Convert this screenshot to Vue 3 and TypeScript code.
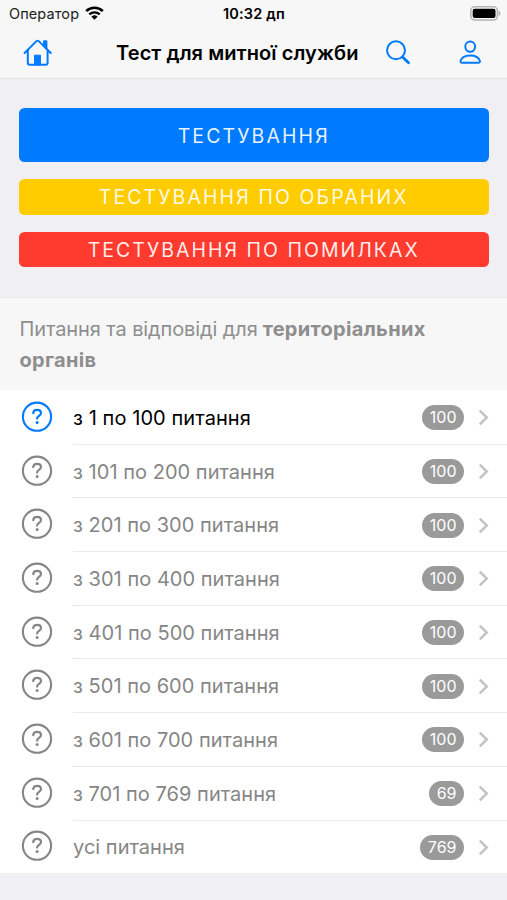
<script setup lang="ts">
interface Row {
  label: string
  count: number
  active?: boolean
}

const rows: Row[] = [
  { label: 'з 1 по 100 питання', count: 100, active: true },
  { label: 'з 101 по 200 питання', count: 100 },
  { label: 'з 201 по 300 питання', count: 100 },
  { label: 'з 301 по 400 питання', count: 100 },
  { label: 'з 401 по 500 питання', count: 100 },
  { label: 'з 501 по 600 питання', count: 100 },
  { label: 'з 601 по 700 питання', count: 100 },
  { label: 'з 701 по 769 питання', count: 69 },
  { label: 'усі питання', count: 769 },
]
</script>

<template>
  <div class="screen">
    <header class="top">
      <div class="status">
        <div class="carrier">
          <span class="carrier-name">Оператор</span>
          <svg class="wifi" width="19" height="14" viewBox="0 0 19 14">
            <path d="M1.2 5.1a12 12 0 0 1 16.6 0" fill="none" stroke="#000" stroke-width="2.6" />
            <path d="M4.3 8.4a7.6 7.6 0 0 1 10.4 0" fill="none" stroke="#000" stroke-width="2.4" />
            <path d="M9.5 13.7 6.4 10.7a4.5 4.5 0 0 1 6.2 0z" fill="#000" />
          </svg>
        </div>
        <span class="clock">10:32 дп</span>
        <div class="power">
          <svg width="31" height="15" viewBox="0 0 31 15">
            <rect x=".8" y=".8" width="26.6" height="13.2" rx="4" fill="#f7f7f7" stroke="#b5b5b5" stroke-width="1.6" />
            <rect x="2.7" y="2.7" width="22.8" height="9.4" rx="2" fill="#000" />
            <path d="M28.6 4.8c2.4 1 2.4 4.2 0 5.2z" fill="#b0b0b0" />
          </svg>
        </div>
      </div>
      <nav class="bar">
        <svg class="home" width="30" height="28" viewBox="0 0 30 28" fill="none" stroke="#007aff" stroke-width="2" stroke-linejoin="round" stroke-linecap="round">
          <path d="M1.6 14 13.2 2.4a2 2 0 0 1 2.8 0L27.7 14" />
          <path d="M4.8 11.5v12.3a2 2 0 0 0 2 2h15.8a2 2 0 0 0 2-2V11.5" />
          <path d="M21 7V2.2h2.4v7.3z" fill="#007aff" />
          <path d="M11.5 25.5v-9.3h6v9.3z" fill="#007aff" stroke-width="1" />
        </svg>
        <h1 class="title">Тест для митної служби</h1>
        <svg class="search" width="26" height="26" viewBox="0 0 26 26" fill="none" stroke="#007aff">
          <circle cx="11" cy="10.3" r="9" stroke-width="2" />
          <path d="m17.5 17 6 5.8" stroke-width="2.8" stroke-linecap="round" />
        </svg>
        <svg class="person" width="24" height="26" viewBox="0 0 24 26" fill="none" stroke="#007aff" stroke-width="2">
          <ellipse cx="12.2" cy="6.6" rx="4.9" ry="5.2" />
          <path d="M4.2 22.8c-1.5 0-2-.8-1.6-2.1 1-3.1 4.6-5.3 9.6-5.3s8.6 2.2 9.6 5.3c.4 1.3-.1 2.1-1.6 2.1z" />
        </svg>
      </nav>
    </header>

    <section class="actions">
      <button class="btn blue">ТЕСТУВАННЯ</button>
      <button class="btn yellow">ТЕСТУВАННЯ ПО ОБРАНИХ</button>
      <button class="btn red">ТЕСТУВАННЯ ПО ПОМИЛКАХ</button>
    </section>

    <div class="group-title">
      <div class="line"><span class="lead">Питання та відповіді для</span><b>територіальних</b></div>
      <div class="line"><b>органів</b></div>
    </div>

    <ul class="list">
      <li v-for="row in rows" :key="row.label" class="row" :class="{ active: row.active }">
        <svg class="question" width="32" height="32" viewBox="0 0 32 32" fill="none" stroke="currentColor">
          <circle cx="16" cy="15.7" r="14.1" stroke-width="2.1" />
          <path d="M12.2 12.1c.2-2.1 1.700-3.300 3.900-3.300 2.300 0 3.900 1.200 3.900 3.200 0 3-3.900 2.900-3.900 5.600" stroke-width="2.2" stroke-linecap="round" />
          <circle cx="16.1" cy="21.4" r="1.5" fill="currentColor" stroke="none" />
        </svg>
        <div class="content">
          <span class="label">{{ row.label }}</span>
          <span class="badge">{{ row.count }}</span>
          <svg class="chevron" width="11" height="17" viewBox="0 0 11 17" fill="none" stroke="#c3c3c6" stroke-width="2.5">
            <path d="m1.8 1.6 7 6.9-7 6.9" />
          </svg>
        </div>
      </li>
    </ul>
  </div>
</template>

<style>
body {
  margin: 0;
  background: #efeff4;
}
</style>

<style scoped>
.screen {
  width: 507px;
  height: 900px;
  overflow: hidden;
  background: #efeff4;
  font-family: Inter, "Liberation Sans", sans-serif;
}

.top {
  box-sizing: border-box;
  height: 79px;
  background: #f7f7f7;
  border-bottom: 1px solid #e3e3e5;
}

.status {
  display: grid;
  grid-template-columns: 1fr auto 1fr;
  align-items: center;
  height: 27px;
  padding: 0 6px 0 9px;
  font-size: 14.5px;
}

.carrier {
  display: flex;
  align-items: center;
  gap: 6px;
  color: #222;
}

.carrier-name {
  letter-spacing: 0.1px;
}

.wifi {
  margin-top: -2px;
}

.clock {
  margin-right: 2px;
  font-weight: 600;
  letter-spacing: 0.2px;
}

.power {
  display: flex;
  justify-content: flex-end;
}

.bar {
  display: flex;
  align-items: center;
  height: 51px;
  padding-left: 23px;
}

.title {
  margin: 0 0 0 63px;
  width: 243px;
  white-space: nowrap;
  font-size: 20px;
  font-weight: 600;
  letter-spacing: 0.08px;
  line-height: 28px;
}

.search {
  margin-left: 26px;
}

.person {
  margin-left: 47px;
}

.actions {
  box-sizing: border-box;
  display: flex;
  flex-direction: column;
  gap: 17.2px;
  height: 218px;
  padding: 29.4px 18.5px 0 19px;
}

.btn {
  display: block;
  height: 35.5px;
  padding: 1px 0 0;
  border: 0;
  border-radius: 5.5px;
  color: rgba(255, 255, 255, 0.92);
  font-family: inherit;
  font-size: 19.5px;
  font-weight: 400;
  letter-spacing: 2.1px;
  text-align: center;
}

.blue {
  height: 53.5px;
  background: #007aff;
}

.yellow {
  background: #fc0;
}

.red {
  background: #ff3b30;
  letter-spacing: 2.02px;
}

.group-title {
  box-sizing: border-box;
  height: 93px;
  padding: 16px 19.5px 0;
  border-top: 1px solid #ebebee;
  background: #f7f7f7;
  color: #8e8e8e;
  font-size: 20px;
  line-height: 30.5px;
}

.line {
  display: flex;
  gap: 5px;
  white-space: nowrap;
}

.lead {
  letter-spacing: -0.1px;
}

.line b {
  letter-spacing: 0.3px;
}

.list {
  margin: 0;
  padding: 0;
  list-style: none;
  background: #fff;
}

.row {
  box-sizing: border-box;
  display: flex;
  align-items: center;
  height: 53.7px;
  padding-left: 21px;
  color: #868686;
}

.content {
  box-sizing: border-box;
  display: flex;
  flex: 1;
  align-items: center;
  height: 100%;
  margin: 1px 0 -1px 20px;
  padding: 1px 18px 0 0;
  border-bottom: 1px solid #e9e9eb;
}

.row:last-child .content {
  border-bottom-color: transparent;
}

.label {
  flex: 1;
  font-size: 20px;
  letter-spacing: 0.03px;
}

.active {
  color: #007aff;
}

.active .label {
  color: #000;
  letter-spacing: 0.08px;
}

.badge {
  box-sizing: border-box;
  height: 25px;
  padding: 0 7.5px;
  border-radius: 13px;
  background: #9a9a9a;
  color: #fff;
  font-size: 16px;
  line-height: 24px;
}

.chevron {
  margin-left: 14px;
}
</style>
